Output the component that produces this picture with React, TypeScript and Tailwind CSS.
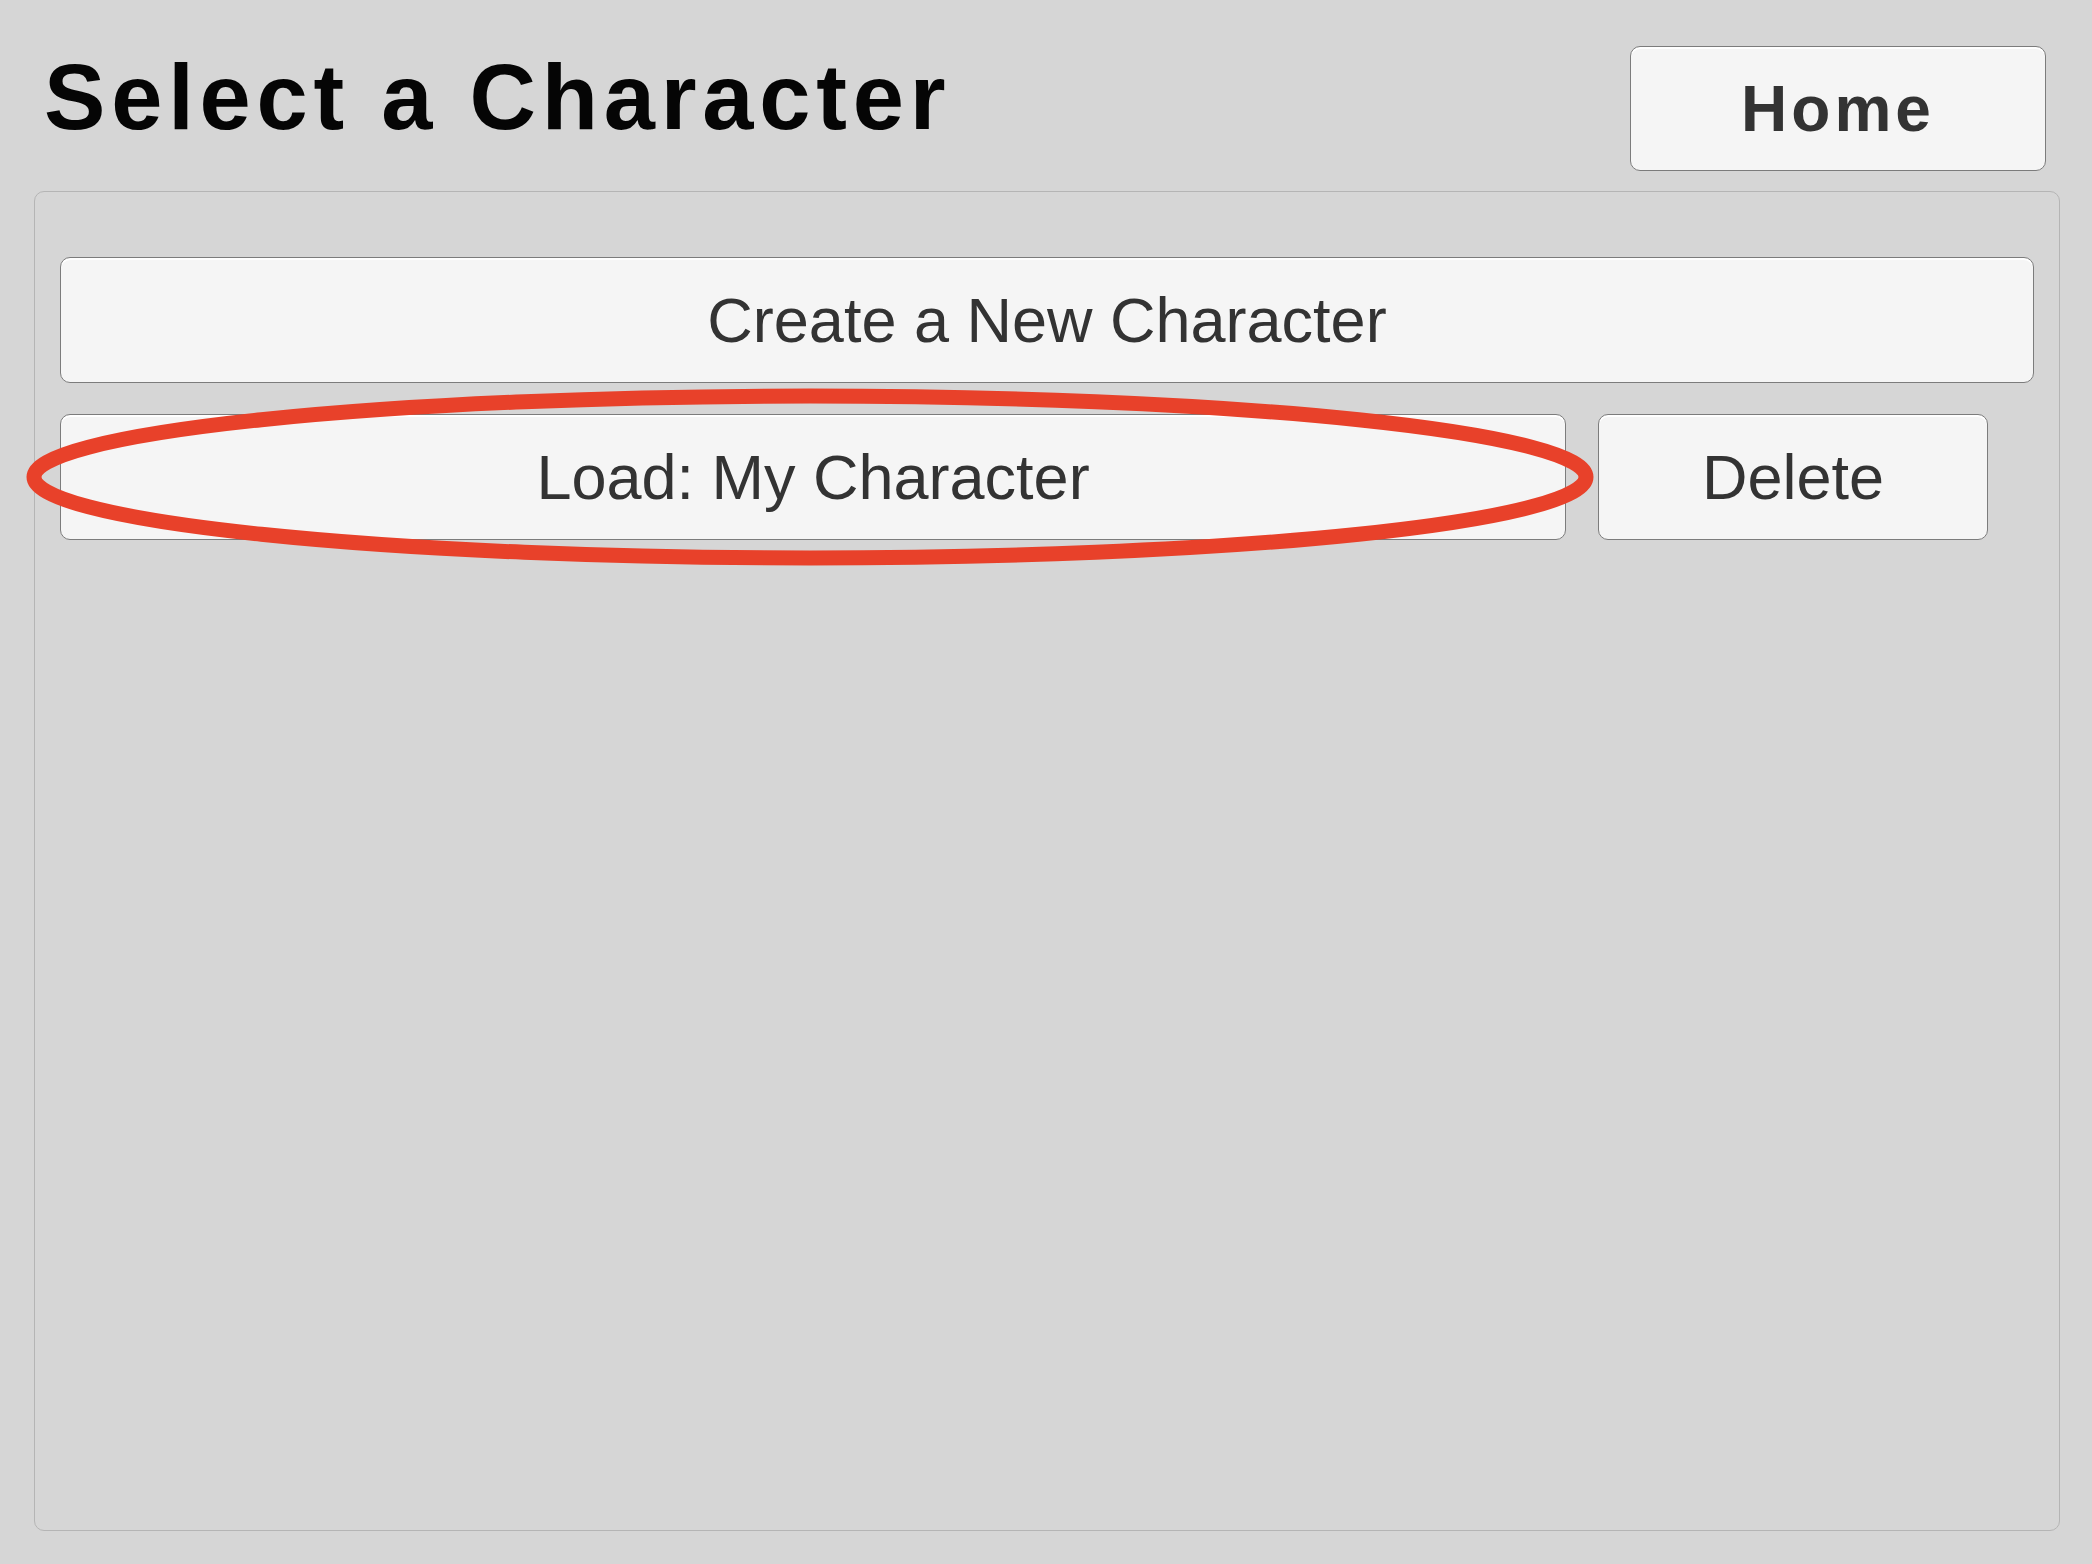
import React from "react";

export default function App() {
  const font = { fontFamily: '"Liberation Sans", Arial, sans-serif' };
  return (
    <div
      className="relative w-[2092px] h-[1564px] bg-[#d6d6d6] flex flex-col overflow-hidden"
      style={font}
    >
      <div className="flex items-start justify-between pl-[44px] pr-[46px] pt-[46px]">
        <h1 className="mt-[5px] text-[92px] leading-none font-bold tracking-[5.8px] text-[#050505]">
          Select a Character
        </h1>
        <button className="w-[416px] h-[125px] rounded-[10px] border border-[#7c7c7c] bg-[#f5f5f5] shadow-[inset_0_2px_0_#ffffff] text-[64px] font-bold tracking-[4px] text-[#333333] leading-none">
          Home
        </button>
      </div>
      <div className="mt-[20px] ml-[34px] mr-[32px] mb-[33px] flex-1 rounded-[10px] border border-[#b5b5b5] pt-[65px] px-[25px] flex flex-col gap-[31px]">
        <button className="w-full h-[126px] rounded-[10px] border border-[#7c7c7c] bg-[#f5f5f5] shadow-[inset_0_2px_0_#ffffff] text-[63px] text-[#333333] leading-none">
          Create a New Character
        </button>
        <div className="flex gap-[32px]">
          <button className="w-[1506px] h-[126px] rounded-[10px] border border-[#7c7c7c] bg-[#f5f5f5] shadow-[inset_0_2px_0_#ffffff] text-[63px] text-[#333333] leading-none">
            Load: My Character
          </button>
          <button className="w-[390px] h-[126px] rounded-[10px] border border-[#7c7c7c] bg-[#f5f5f5] shadow-[inset_0_2px_0_#ffffff] text-[63px] text-[#333333] leading-none">
            Delete
          </button>
        </div>
      </div>
      <svg
        className="absolute left-0 top-0 pointer-events-none"
        width="2092"
        height="1564"
        viewBox="0 0 2092 1564"
      >
        <ellipse
          cx="810"
          cy="477"
          rx="776"
          ry="81"
          fill="none"
          stroke="#e8412a"
          strokeWidth="15"
        />
      </svg>
    </div>
  );
}
